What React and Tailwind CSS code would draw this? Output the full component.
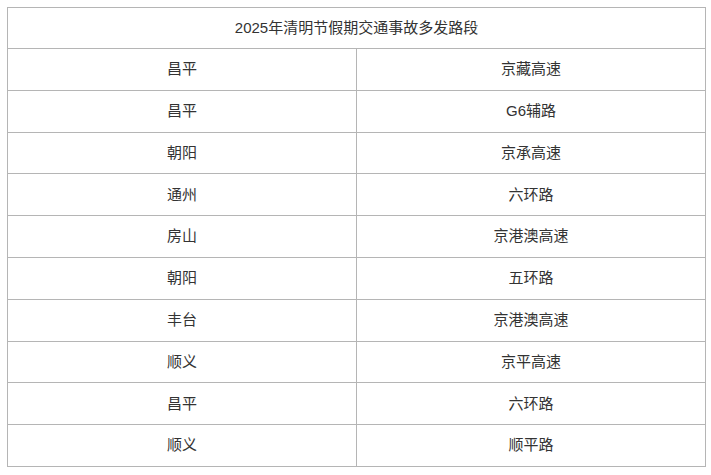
import React from 'react';

const rows = [
  ['昌平', '京藏高速'],
  ['昌平', 'G6辅路'],
  ['朝阳', '京承高速'],
  ['通州', '六环路'],
  ['房山', '京港澳高速'],
  ['朝阳', '五环路'],
  ['丰台', '京港澳高速'],
  ['顺义', '京平高速'],
  ['昌平', '六环路'],
  ['顺义', '顺平路'],
];

export default function App() {
  return (
    <div className="w-[711px] h-[475px] bg-white p-[7px] text-[15px] text-[#333]"
      style={{ fontFamily: '"Liberation Sans", "Noto Sans CJK SC", sans-serif' }}>
      <table className="w-[699px] border-collapse table-fixed">
        <tbody>
          <tr className="h-[41px]">
            <td colSpan={2} className="border border-[#b5b5b5] text-center align-middle">
              2025年清明节假期交通事故多发路段
            </td>
          </tr>
          {rows.map(([a, b], i) => (
            <tr key={i} className="h-[41.8px]">
              <td className="w-1/2 border border-[#b5b5b5] text-center align-middle">{a}</td>
              <td className="w-1/2 border border-[#b5b5b5] text-center align-middle">{b}</td>
            </tr>
          ))}
        </tbody>
      </table>
    </div>
  );
}
